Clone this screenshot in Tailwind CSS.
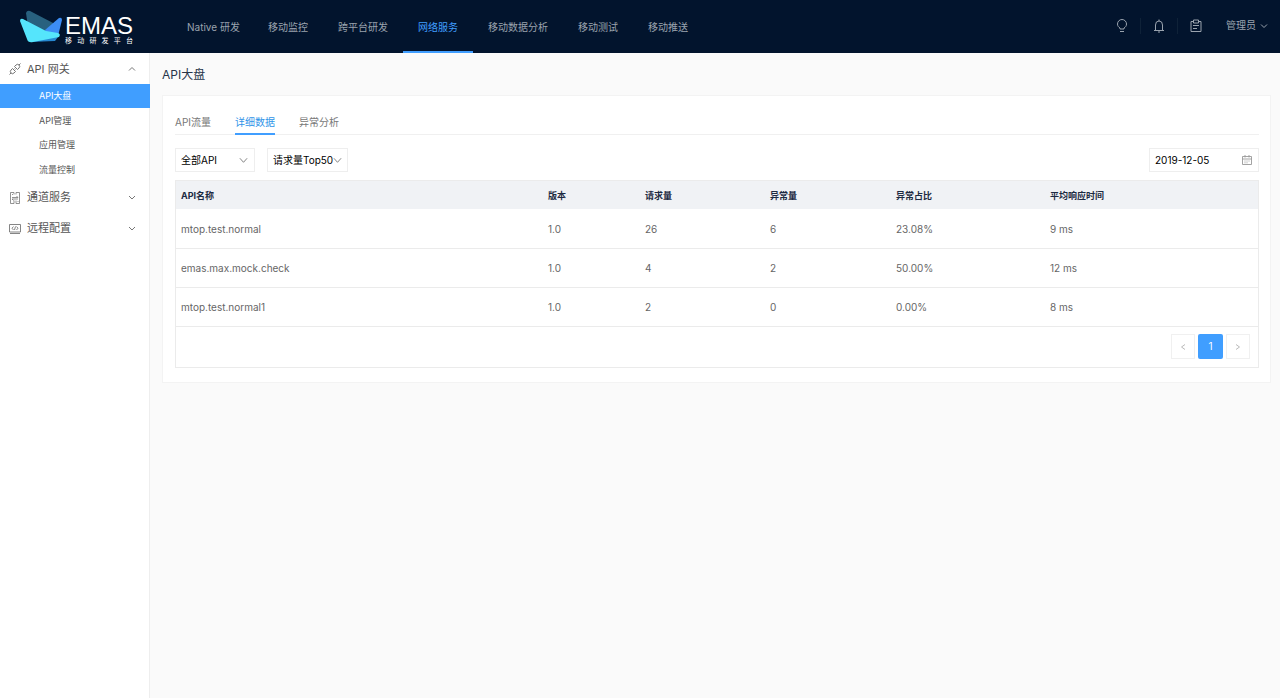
<!DOCTYPE html>
<html lang="zh-CN">
<head>
<meta charset="utf-8">
<meta name="viewport" content="width=device-width, initial-scale=1">
<title>EMAS 移动研发平台</title>
<script src="https://cdn.jsdelivr.net/npm/@tailwindcss/browser@4"></script>
</head>
<body class="flex min-h-screen flex-col bg-[#fafafa] font-['Inter','Noto_Sans_CJK_SC',sans-serif] text-[10px] text-[#555]">

<header class="flex h-[53px] shrink-0 items-stretch justify-between bg-[#02142d] text-[#9aa3ae]">
  <div class="flex">
    <a href="#" class="flex w-[172px] items-start pl-5 pt-[10px]" aria-label="EMAS 移动研发平台">
      <svg class="h-[34px] w-[43px]" viewBox="0 0 43 34" aria-hidden="true">
        <path d="M6 3Q7 0 10 1L35 14L31 31L10 30Z" fill="#28617f"/>
        <path d="M25 20L39 8Q42 7 42 10L38 26L28 29Z" fill="#3c8df5"/>
        <path d="M10 32L34 23L38 27L35 31Z" fill="#2688d2"/>
        <path d="M0 11Q0 8 3 9L26 21L38 23Q41 24 39 27L13 32Q8 33 7 29Z" fill="#55e5fc"/>
      </svg>
      <span class="flex flex-col pl-[2px] pt-[5px] text-white">
        <span class="font-['Liberation_Sans',sans-serif] text-2xl leading-[22px]">EMAS</span>
        <span class="flex w-[68px] justify-between text-[7px] leading-[8px]"><span>移</span><span>动</span><span>研</span><span>发</span><span>平</span><span>台</span></span>
      </span>
    </a>
    <nav class="flex items-stretch" aria-label="主导航">
      <a href="#" class="flex items-center pl-[15px] pr-[13px] pt-px">Native 研发</a>
      <a href="#" class="flex items-center px-[15px] pt-px">移动监控</a>
      <a href="#" class="flex items-center px-[15px] pt-px">跨平台研发</a>
      <a href="#" class="flex items-center border-y-2 border-t-transparent border-b-[#409eff] px-[15px] pt-px text-[#409eff]" aria-current="page">网络服务</a>
      <a href="#" class="flex items-center px-[15px] pt-px">移动数据分析</a>
      <a href="#" class="flex items-center px-[15px] pt-px">移动测试</a>
      <a href="#" class="flex items-center px-[15px] pt-px">移动推送</a>
    </nav>
  </div>
  <div class="flex items-center pr-3 pb-[2px]">
    <button type="button" class="flex h-4 w-9 items-center justify-center" aria-label="帮助">
      <svg class="size-[14px]" viewBox="0 0 14 14" fill="none" stroke="currentColor"><path d="M5 10V9C3.500 8 2.500 7 2.500 5a4.500 4.500 0 0 1 9 0c0 2-1 3-2.500 4v1zM5 12.500h4"/></svg>
    </button>
    <button type="button" class="flex h-4 w-[37px] items-center justify-center border-l border-[#0f2238]" aria-label="通知">
      <svg class="size-[14px]" viewBox="0 0 14 14" fill="none" stroke="currentColor"><path d="M2 11.500h10M3.500 11.500V6a3.500 4 0 0 1 7 0v5.500M7 .5V2M6 13h2"/></svg>
    </button>
    <button type="button" class="flex h-4 w-[37px] items-center justify-center border-l border-[#0f2238]" aria-label="任务">
      <svg class="size-[14px]" viewBox="0 0 14 14" fill="none" stroke="currentColor"><path d="M4.500 2.500h-2.500v10h10v-10h-2.500M4.500 1h5v3h-5zM4 6.500h6M4 9.500h4"/></svg>
    </button>
    <button type="button" class="ml-3 flex items-center gap-1">管理员
      <svg class="size-2" viewBox="0 0 8 8" fill="none" stroke="currentColor"><path d="M1 2.500l3 3 3-3"/></svg>
    </button>
  </div>
</header>

<div class="flex flex-1 items-stretch">
  <aside class="w-[150px] shrink-0 border-r border-[#eee] bg-white">
    <nav aria-label="侧边导航">
      <button type="button" class="flex h-[31px] w-full items-center pl-[9px] pr-[13px] pt-px text-[11px]" aria-expanded="true">
        <svg class="mr-[6px] size-3" viewBox="0 0 12 12" fill="none" stroke="#666" stroke-width=".9"><path d="M5.500 3.500L7 2a2.120 2.120 0 0 1 3 3L8.500 6.500zM3.500 5.500L2 7a2.120 2.120 0 0 0 3 3l1.500-1.500zM10 2l1.500-1.500M2 10L.5 11.500M4.500 6.500l1-1M5.500 7.500l1-1"/></svg>
        <span class="grow text-left">API 网关</span>
        <svg class="size-2" viewBox="0 0 8 8" fill="none" stroke="#777"><path d="M1 5.500l3-3 3 3"/></svg>
      </button>
      <ul class="-mr-px text-[9px]">
        <li><a href="#" class="flex h-6 items-center bg-[#409eff] pl-[39px] text-white" aria-current="page">API大盘</a></li>
        <li><a href="#" class="flex h-[25px] items-center pl-[39px]">API管理</a></li>
        <li><a href="#" class="flex h-6 items-center pl-[39px]">应用管理</a></li>
        <li><a href="#" class="flex h-[25px] items-center pl-[39px]">流量控制</a></li>
      </ul>
      <button type="button" class="flex h-[31px] w-full items-center pl-[9px] pr-[13px] text-[11px]" aria-expanded="false">
        <svg class="mr-[6px] size-3" viewBox="0 0 12 12" fill="none" stroke="#777" stroke-width=".8"><path d="M5 .5H1.500v11H5V8.500M7 .5h3.500v11H7V8.500M5 .5v2M7 .5v2M3 5.500h6L7.500 4M9 7H3l1.500 1.500M3 2.500h1M8.500 9.500h1"/></svg>
        <span class="grow text-left">通道服务</span>
        <svg class="size-2" viewBox="0 0 8 8" fill="none" stroke="#777"><path d="M1 2l3 3 3-3"/></svg>
      </button>
      <button type="button" class="flex h-[31px] w-full items-center pl-[9px] pr-[13px] text-[11px]" aria-expanded="false">
        <svg class="mr-[6px] size-3" viewBox="0 0 12 12" fill="none" stroke="#777" stroke-width=".9"><path d="M.5 1.500h11v7.500H.5zM1 10.500h10M4.500 3.500L3 5.200 4.500 7M7.500 3.500L9 5.200 7.500 7M6.500 3.500l-1 3.500"/></svg>
        <span class="grow text-left">远程配置</span>
        <svg class="size-2" viewBox="0 0 8 8" fill="none" stroke="#777"><path d="M1 2l3 3 3-3"/></svg>
      </button>
    </nav>
  </aside>

  <main class="min-w-0 flex-1 pl-3 pr-[9px]">
    <h1 class="flex h-[42px] items-center pt-px text-xs text-[#273449]">API大盘</h1>
    <section class="border border-[#f3f3f3] bg-white pl-3 pr-[11px] pb-[14px] pt-[13px]">
      <div role="tablist" class="flex h-[26px] gap-6 border-b border-[#f0f0f0] text-[#777]">
        <button type="button" role="tab" class="h-[26px] pt-px">API流量</button>
        <button type="button" role="tab" aria-selected="true" class="h-[26px] border-b-2 border-[#409eff] pt-[3px] text-[#2f94e8]">详细数据</button>
        <button type="button" role="tab" class="h-[26px] pt-px">异常分析</button>
      </div>
      <div class="flex justify-between pb-2 pt-[13px] text-black">
        <div class="flex gap-3">
          <label class="relative">
            <select aria-label="API" class="h-6 w-20 appearance-none border border-[#eee] bg-white pl-[5px]"><option>全部API</option></select>
            <svg class="pointer-events-none absolute right-[7px] top-2 size-[9px]" viewBox="0 0 10 10" fill="none" stroke="#777"><path d="M1 2.500l4 4.500 4-4.500"/></svg>
          </label>
          <label class="relative">
            <select aria-label="排序" class="h-6 w-[81px] appearance-none border border-[#eee] bg-white pl-[5px]"><option>请求量Top50</option></select>
            <svg class="pointer-events-none absolute right-[6px] top-2 size-[9px]" viewBox="0 0 10 10" fill="none" stroke="#777"><path d="M1 2.500l4 4.500 4-4.500"/></svg>
          </label>
        </div>
        <label class="flex h-6 w-[110px] items-center border border-[#eee] bg-white pl-[5px] pr-[6px]">
          <input type="text" aria-label="日期" value="2019-12-05" class="min-w-0 flex-1 outline-none">
          <svg class="size-[10px]" viewBox="0 0 10 10" fill="none" stroke="#999" stroke-width=".9"><path d="M.5 1.500h9v8h-9zM.5 4h9M3 0v2.500M7 0v2.500M2.500 6h1M4.500 6h1M6.500 6h1M2.500 7.800h1M4.500 7.800h1"/></svg>
        </label>
      </div>
      <div class="border border-[#ebebeb]">
        <table class="w-full table-fixed text-left">
          <colgroup><col class="w-[366px]"><col class="w-[97px]"><col class="w-[125px]"><col class="w-[126px]"><col class="w-[154px]"><col></colgroup>
          <thead class="bg-[#f0f2f5] text-[9px] text-[#1c2a42]">
            <tr class="h-7"><th class="pl-[5px] pt-px font-bold">API名称</th><th class="pl-[6px] pt-px font-bold">版本</th><th class="pl-[6px] pt-px font-bold">请求量</th><th class="pl-[6px] pt-px font-bold">异常量</th><th class="pl-[6px] pt-px font-bold">异常占比</th><th class="pl-[6px] pt-px font-bold">平均响应时间</th></tr>
          </thead>
          <tbody class="text-[#666]">
            <tr class="h-[39px] border-b border-[#ebebeb]"><td class="pl-[5px] pt-[2px]">mtop.test.normal</td><td class="pl-[6px] pt-[2px]">1.0</td><td class="pl-[6px] pt-[2px]">26</td><td class="pl-[6px] pt-[2px]">6</td><td class="pl-[6px] pt-[2px]">23.08%</td><td class="pl-[6px] pt-[2px]">9 ms</td></tr>
            <tr class="h-[39px] border-b border-[#ebebeb]"><td class="pl-[5px] pt-[2px]">emas.max.mock.check</td><td class="pl-[6px] pt-[2px]">1.0</td><td class="pl-[6px] pt-[2px]">4</td><td class="pl-[6px] pt-[2px]">2</td><td class="pl-[6px] pt-[2px]">50.00%</td><td class="pl-[6px] pt-[2px]">12 ms</td></tr>
            <tr class="h-[39px] border-b border-[#ebebeb]"><td class="pl-[5px] pt-[2px]">mtop.test.normal1</td><td class="pl-[6px] pt-[2px]">1.0</td><td class="pl-[6px] pt-[2px]">2</td><td class="pl-[6px] pt-[2px]">0</td><td class="pl-[6px] pt-[2px]">0.00%</td><td class="pl-[6px] pt-[2px]">8 ms</td></tr>
          </tbody>
        </table>
        <div class="flex h-10 items-center justify-end gap-[3px] pr-2">
          <button type="button" disabled aria-label="上一页" class="flex h-[25px] w-6 items-center justify-center border border-[#f0f0f0]"><svg class="size-2" viewBox="0 0 8 8" fill="none" stroke="#bbb"><path d="M6 1.500L2.500 4 6 6.500"/></svg></button>
          <button type="button" aria-current="page" class="h-[25px] w-[25px] rounded-xs bg-[#409eff] text-white">1</button>
          <button type="button" disabled aria-label="下一页" class="flex h-[25px] w-6 items-center justify-center border border-[#f0f0f0]"><svg class="size-2" viewBox="0 0 8 8" fill="none" stroke="#bbb"><path d="M2 1.500L5.500 4 2 6.500"/></svg></button>
        </div>
      </div>
    </section>
  </main>
</div>
</body>
</html>
